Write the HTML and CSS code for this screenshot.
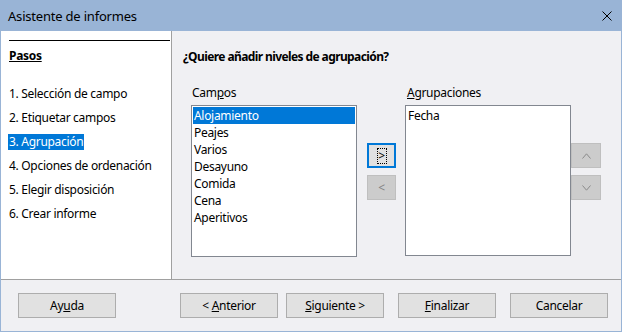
FILE: index.html
```html
<!DOCTYPE html>
<html>
<head>
  <meta charset="UTF-8">
  <link rel="stylesheet" href="styles.css">
</head>
<body>
  <div class="window">
    <div class="titlebar">
      <span class="title">Asistente de informes</span>
      <svg class="close" width="10" height="10" viewBox="0 0 10 10">
        <path d="M0.5 0.5 L9.5 9.5 M9.5 0.5 L0.5 9.5" stroke="#000" stroke-width="1" fill="none"/>
      </svg>
    </div>

    <div class="main">
      <!-- pasos del asistente -->
      <div class="sidebar">
        <div class="rule"></div>
        <div class="steps-title">Pasos</div>
        <ul class="steps">
          <li>1. Selección de campo</li>
          <li>2. Etiquetar campos</li>
          <li><span class="current">3. Agrupación</span></li>
          <li>4. Opciones de ordenación</li>
          <li>5. Elegir disposición</li>
          <li>6. Crear informe</li>
        </ul>
      </div>

      <div class="content">
        <div class="question">¿Quiere añadir niveles de agrupación?</div>
        <div class="grouping">
          <div class="field-col">
            <div class="label">Cam<u>p</u>os</div>
            <ul class="listbox">
              <li class="selected">Alojamiento</li>
              <li>Peajes</li>
              <li>Varios</li>
              <li>Desayuno</li>
              <li>Comida</li>
              <li>Cena</li>
              <li>Aperitivos</li>
            </ul>
          </div>
          <div class="move-btns">
            <button class="small focused"><span class="focus-rect">&gt;</span></button>
            <button class="small" disabled>&lt;</button>
          </div>
          <div class="field-col">
            <div class="label second"><u>A</u>grupaciones</div>
            <ul class="listbox short">
              <li>Fecha</li>
            </ul>
          </div>
          <div class="move-btns order">
            <button class="small" disabled>
              <svg width="9" height="6" viewBox="0 0 9 6"><path d="M0.5 5.5 L4.5 0.8 L8.5 5.5" stroke="#8a8a8a" fill="none"/></svg>
            </button>
            <button class="small" disabled>
              <svg width="9" height="6" viewBox="0 0 9 6"><path d="M0.5 0.5 L4.5 5.2 L8.5 0.5" stroke="#8a8a8a" fill="none"/></svg>
            </button>
          </div>
        </div>
      </div>
    </div>

    <div class="footer">
      <button class="btn help"><span>Ay<u>u</u>da</span></button>
      <button class="btn prev"><span>&lt; <u>A</u>nterior</span></button>
      <button class="btn next"><span><u>S</u>iguiente &gt;</span></button>
      <button class="btn finish"><span><u>F</u>inalizar</span></button>
      <button class="btn cancel"><span>Cancelar</span></button>
    </div>
  </div>
</body>
</html>
```

FILE: styles.css
```css
/* base */
* {
  margin: 0;
  padding: 0;
  box-sizing: border-box;
}

body {
  margin: 0;
  font-family: "Noto Sans", "Liberation Sans", sans-serif;
  font-size: 12px;
  letter-spacing: -0.3px;
  color: #000000;
  background: #f0f0f3;
}

ul {
  list-style: none;
}

/* ventana */
.window {
  width: 622px;
  height: 332px;
  border: 1px solid #99b4d6;
  border-top: 0;
  background: #f0f0f3;
  display: flex;
  flex-direction: column;
}

.titlebar {
  height: 31px;
  background: #99b4d6;
  display: flex;
  align-items: center;
  justify-content: space-between;
  padding-left: 7px;
  padding-right: 9px;
}

.title {
  font-size: 13px;
  letter-spacing: -0.2px;
}

.main {
  height: 248px;
  display: flex;
}

/* barra lateral */
.sidebar {
  width: 171px;
  background: #ffffff;
  border-right: 1px solid #a0a0a0;
  padding-left: 8px;
}

.rule {
  width: 161px;
  margin-top: 9px;
  border-top: 1px solid #000000;
}

.steps-title {
  margin-top: 7px;
  line-height: 16px;
  font-weight: bold;
  text-decoration: underline;
}

.steps {
  margin-top: 18px;
}

.steps li {
  line-height: 24px;
  height: 24px;
}

.steps .current {
  display: inline-block;
  line-height: 16px;
  padding: 0 1px;
  margin-left: -1px;
  background: #0078d7;
  color: #ffffff;
}

/* contenido */
.content {
  flex: 1;
  padding-left: 11px;
}

.question {
  margin-top: 18px;
  line-height: 16px;
  font-weight: bold;
  letter-spacing: -0.6px;
}

.grouping {
  display: flex;
  margin-top: 20px;
  margin-left: 8px;
}

.label {
  line-height: 16px;
  margin-bottom: 4px;
  padding-left: 1px;
}

.label.second {
  padding-left: 2px;
}

.listbox {
  width: 166px;
  height: 152px;
  background: #ffffff;
  border: 1px solid #828790;
  padding: 1px;
}

.listbox.short {
  height: 151px;
}

.listbox li {
  line-height: 17px;
  padding-left: 1px;
}

.listbox .selected {
  background: #0078d7;
  color: #ffffff;
}

.move-btns {
  display: flex;
  flex-direction: column;
  gap: 7px;
  margin-top: 58px;
  margin-left: 10px;
  margin-right: 9px;
}

.move-btns.order {
  margin-left: 0;
  margin-right: 0;
}

/* botones */
button {
  font-family: inherit;
  font-size: 12px;
  letter-spacing: -0.3px;
  color: #000000;
  background: #e1e1e1;
  border: 1px solid #adadad;
  display: flex;
  align-items: center;
  justify-content: center;
}

.small {
  width: 29px;
  height: 25px;
}

.order .small {
  width: 30px;
}

.small.focused {
  border: 2px solid #0078d7;
}

.focus-rect {
  display: block;
  width: 10px;
  height: 16px;
  line-height: 14px;
  border: 1px dotted #000000;
  text-align: center;
}

button:disabled {
  background: #cccccc;
  border-color: #bfbfbf;
  color: #838383;
}

/* pie */
.footer {
  flex: 1;
  border-top: 1px solid #a0a0a0;
  display: flex;
  align-items: flex-start;
  padding-top: 13px;
  padding-left: 17px;
}

.btn {
  width: 98px;
  height: 25px;
}

.prev {
  margin-left: 64px;
}

.next {
  margin-left: 8px;
}

.finish,
.cancel {
  margin-left: 14px;
}
```
